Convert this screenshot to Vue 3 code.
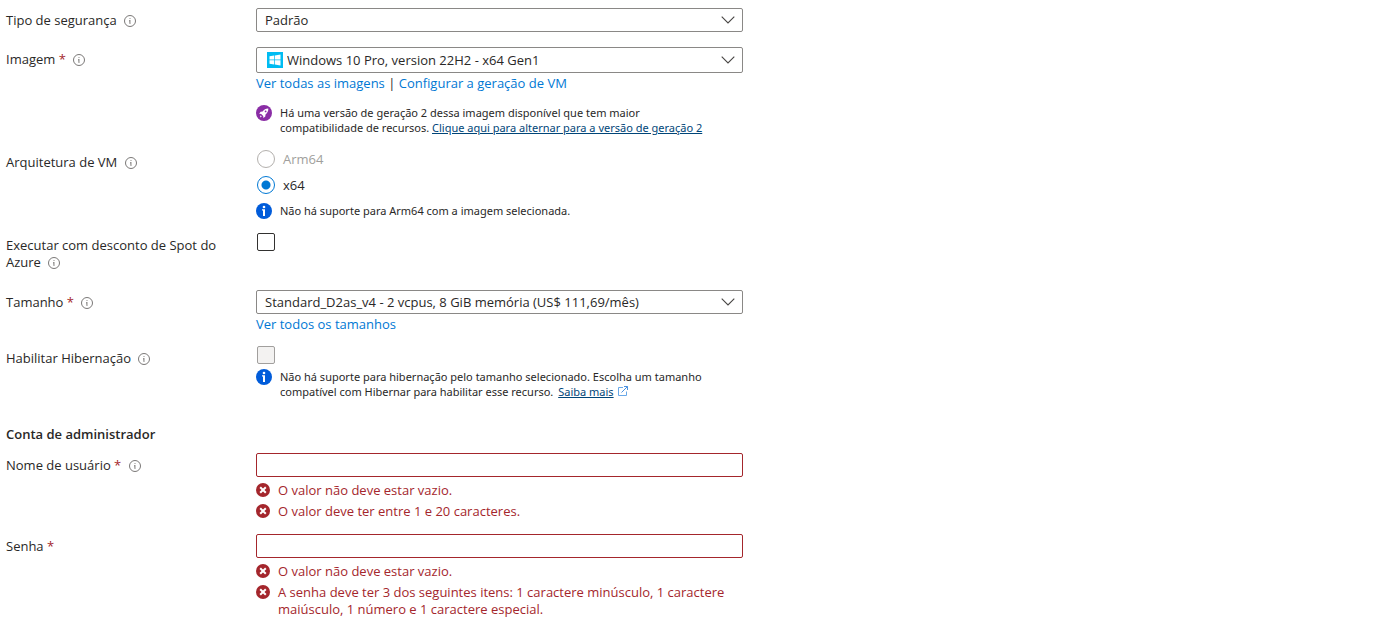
<script setup>
import { ref, h } from 'vue'

const securityType = ref('padrao')
const image = ref('win10')
const architecture = ref('x64')
const spot = ref(false)
const size = ref('d2as')
const username = ref('')
const password = ref('')

const userErrors = ['O valor não deve estar vazio.', 'O valor deve ter entre 1 e 20 caracteres.']
const passwordErrors = [
  'O valor não deve estar vazio.',
  'A senha deve ter 3 dos seguintes itens: 1 caractere minúsculo, 1 caractere maiúsculo, 1 número e 1 caractere especial.',
]

const svg = (cls, box, children) =>
  h('svg', { class: cls, viewBox: `0 0 ${box} ${box}`, 'aria-hidden': 'true' }, children)

const HelpIcon = () =>
  svg('help-icon', 12, [
    h('circle', { cx: 6, cy: 6, r: 5.5, fill: 'none', stroke: '#7a7877' }),
    h('path', { d: 'M5.5 3h1v1h-1zM5 5h1.500v4h-1z', fill: '#8f8d8c' }),
  ])
const InfoIcon = () =>
  svg('note-icon', 16, [
    h('circle', { cx: 8, cy: 8, r: 8, fill: '#015cda' }),
    h('circle', { cx: 8, cy: 4, r: 1.3, fill: '#fff' }),
    h('path', { d: 'M6 6.300h3V13H7V7.500H6z', fill: '#fff' }),
  ])
const RocketIcon = () =>
  svg('note-icon', 16, [
    h('circle', { cx: 8, cy: 8, r: 8, fill: '#8a2da5' }),
    h('path', {
      d: 'M12.3 3.6C10 3.5 8 4.6 6.6 6.6L4.6 6.8 3.2 8.7l2 .2 2 2 .2 2 1.9-1.4.2-2c2-1.4 3-3.500 2.800-5.900z',
      fill: '#fff',
    }),
    h('path', { d: 'M4.600 10.200l1.200 1.200-1.900 1z', fill: '#fff' }),
    h('circle', { cx: 9.6, cy: 6.4, r: 0.9, fill: '#8a2da5' }),
  ])
const ErrorIcon = () =>
  svg('error-icon', 14, [
    h('circle', { cx: 7, cy: 7, r: 7, fill: '#a4262c' }),
    h('path', { d: 'M4.200 4.200l5.600 5.600M9.800 4.200l-5.600 5.600', stroke: '#fff', 'stroke-width': 2 }),
  ])
const Chevron = () =>
  svg('chevron', 14, [
    h('path', { d: 'M.7 3.700L7 10l6.300-6.300', fill: 'none', stroke: '#484644', 'stroke-width': 1.1 }),
  ])
const WindowsIcon = () =>
  svg('windows-icon', 16, [
    h('path', { d: 'M0 0h16v16H0z', fill: '#00bcf2' }),
    h('path', {
      d: 'M2.500 4.200l4.700-.7v4.100H2.500zM7.900 3.400l5.600-.8v5H7.900zM2.500 8.300h4.700v4.200l-4.700-.7zM7.900 8.300h5.600v5.100l-5.600-.8z',
      fill: '#fff',
    }),
  ])
const ExternalIcon = () =>
  svg('external-icon', 12, [
    h('path', { d: 'M6 2.500H1.500v8h8V6.500', fill: 'none', stroke: '#69a8e8' }),
    h('path', { d: 'M4.500 7.500L10.500 1.500M7 1.500h3.500V5', fill: 'none', stroke: '#4a91e0' }),
  ])
</script>

<template>
  <form class="vm-form" @submit.prevent>
    <div class="row">
      <label class="label" for="security">Tipo de segurança <HelpIcon /></label>
      <div class="field">
        <div class="dropdown">
          <select id="security" v-model="securityType"><option value="padrao">Padrão</option></select>
          <Chevron />
        </div>
      </div>
    </div>

    <div class="row">
      <label class="label" for="image">Imagem <span class="required">*</span> <HelpIcon /></label>
      <div class="field">
        <div class="dropdown with-icon">
          <WindowsIcon />
          <select id="image" v-model="image">
            <option value="win10">Windows 10 Pro, version 22H2 - x64 Gen1</option>
          </select>
          <Chevron />
        </div>
        <div class="links">
          <a href="#">Ver todas as imagens</a> | <a href="#">Configurar a geração de VM</a>
        </div>
        <div class="note note-promo">
          <RocketIcon />
          <p>Há uma versão de geração 2 dessa imagem disponível que tem maior<br />
            compatibilidade de recursos. <a href="#">Clique aqui para alternar para a versão de geração 2</a></p>
        </div>
      </div>
    </div>

    <div class="row" role="radiogroup" aria-labelledby="arch-label">
      <div id="arch-label" class="label">Arquitetura de VM <HelpIcon /></div>
      <div class="field">
        <div class="radios">
          <label class="radio disabled">
            <input v-model="architecture" type="radio" name="arch" value="arm64" disabled />Arm64
          </label>
          <label class="radio">
            <input v-model="architecture" type="radio" name="arch" value="x64" />x64
          </label>
        </div>
        <div class="note note-arch">
          <InfoIcon />
          <p>Não há suporte para Arm64 com a imagem selecionada.</p>
        </div>
      </div>
    </div>

    <div class="row row-spot">
      <label class="label" for="spot">Executar com desconto de Spot do Azure <HelpIcon /></label>
      <div class="field"><input id="spot" v-model="spot" class="check" type="checkbox" /></div>
    </div>

    <div class="row row-size">
      <label class="label" for="size">Tamanho <span class="required">*</span> <HelpIcon /></label>
      <div class="field">
        <div class="dropdown">
          <select id="size" v-model="size">
            <option value="d2as">Standard_D2as_v4 - 2 vcpus, 8 GiB memória (US$ 111,69/mês)</option>
          </select>
          <Chevron />
        </div>
        <div class="links"><a href="#">Ver todos os tamanhos</a></div>
      </div>
    </div>

    <div class="row row-hibernate">
      <label class="label" for="hibernate">Habilitar Hibernação <HelpIcon /></label>
      <div class="field">
        <input id="hibernate" class="check" type="checkbox" disabled />
        <div class="note note-hibernate">
          <InfoIcon />
          <p>Não há suporte para hibernação pelo tamanho selecionado. Escolha um tamanho<br />
            compatível com Hibernar para habilitar esse recurso. <a class="more" href="#">Saiba mais</a> <ExternalIcon /></p>
        </div>
      </div>
    </div>

    <h2>Conta de administrador</h2>

    <div class="row row-user">
      <label class="label" for="user">Nome de usuário <span class="required">*</span> <HelpIcon /></label>
      <div class="field">
        <input id="user" v-model="username" class="text" type="text" aria-invalid="true" />
        <ul class="errors">
          <li v-for="e in userErrors" :key="e"><ErrorIcon /><span>{{ e }}</span></li>
        </ul>
      </div>
    </div>

    <div class="row row-password">
      <label class="label" for="password">Senha <span class="required">*</span></label>
      <div class="field">
        <input id="password" v-model="password" class="text" type="password" aria-invalid="true" />
        <ul class="errors">
          <li v-for="e in passwordErrors" :key="e"><ErrorIcon /><span>{{ e }}</span></li>
        </ul>
      </div>
    </div>
  </form>
</template>

<style>
body {
  background: #fff;
}
</style>

<style scoped>
.vm-form {
  box-sizing: border-box;
  max-width: 743px;
  padding: 8px 0 0 6px;
  color: #292827;
  font: 13px/17px "Open Sans", "Noto Sans", sans-serif;
}
.row {
  display: grid;
  grid-template-columns: 220px minmax(0, 1fr);
  column-gap: 30px;
  margin-top: 15px;
}
.row:first-child {
  margin-top: 0;
}
.row-spot,
.row-password {
  margin-top: 14px;
}
.row-size {
  margin-top: 19px;
}
.row-hibernate {
  margin-top: 12px;
}
.row-user {
  margin-top: 9px;
}
.label {
  padding-top: 4px;
}
.required {
  color: #a4262c;
}
.help-icon {
  width: 12px;
  height: 12px;
  margin-left: 4px;
  vertical-align: -2px;
}
.dropdown {
  position: relative;
}
select {
  display: block;
  box-sizing: border-box;
  width: 100%;
  height: 24px;
  padding: 0 30px 0 8px;
  border: 1px solid #8a8886;
  border-radius: 2px;
  appearance: none;
  background: #fff;
  color: inherit;
  font: inherit;
}
.with-icon select {
  height: 26px;
  padding-left: 30px;
}
.chevron {
  position: absolute;
  top: 0;
  bottom: 0;
  right: 8px;
  width: 14px;
  height: 14px;
  margin: auto 0;
  pointer-events: none;
}
.windows-icon {
  position: absolute;
  top: 0;
  bottom: 0;
  left: 11px;
  width: 16px;
  height: 16px;
  margin: auto 0;
  pointer-events: none;
}
a {
  color: #0078d4;
  text-decoration: none;
}
.links {
  line-height: 20px;
}
.note {
  display: flex;
  gap: 8px;
  font-family: "Noto Sans", "Open Sans", sans-serif;
  font-size: 11px;
  line-height: 15px;
}
.note p {
  margin: 0;
}
.note a {
  color: #004578;
  text-decoration: underline;
}
.note-icon {
  flex: none;
  width: 16px;
  height: 16px;
}
.note-promo {
  margin-top: 12px;
}
.note-arch {
  margin-top: 9px;
}
.note-hibernate {
  margin-top: 5px;
}
.more {
  margin-left: 2px;
}
.external-icon {
  width: 12px;
  height: 12px;
  margin-left: 1px;
  vertical-align: -1px;
}
.radios {
  display: flex;
  flex-direction: column;
  gap: 8px;
}
.radio {
  display: flex;
  align-items: center;
  gap: 8px;
  padding-left: 1px;
  line-height: 18px;
}
.disabled {
  color: #a19f9d;
}
.radio input {
  box-sizing: border-box;
  width: 18px;
  height: 18px;
  margin: 0;
  border: 1px solid #0078d4;
  border-radius: 50%;
  appearance: none;
}
.radio input:checked {
  background: radial-gradient(circle, #0078d4 4px, #fff 5px);
}
.radio input:disabled {
  border-color: #b3b0ad;
}
.check {
  display: block;
  box-sizing: border-box;
  width: 18px;
  height: 18px;
  margin: 0 0 0 1px;
  border: 1px solid #323130;
  border-radius: 2px;
  appearance: none;
  background: #fff;
}
.check:disabled {
  border-color: #a19f9d;
  background: #f3f2f1;
}
h2 {
  margin: 25px 0 0;
  font-size: 13px;
  font-weight: 600;
  line-height: 20px;
}
.text {
  display: block;
  box-sizing: border-box;
  width: 100%;
  height: 24px;
  padding: 0 8px;
  border: 1px solid #a4262c;
  border-radius: 2px;
  background: #fff;
  font: inherit;
}
.errors {
  display: flex;
  flex-direction: column;
  gap: 4px;
  margin: 5px 0 0;
  padding: 0;
  list-style: none;
  color: #a4262c;
}
.errors li {
  display: flex;
  gap: 8px;
}
.error-icon {
  flex: none;
  width: 14px;
  height: 14px;
  margin-top: 1px;
}
</style>
